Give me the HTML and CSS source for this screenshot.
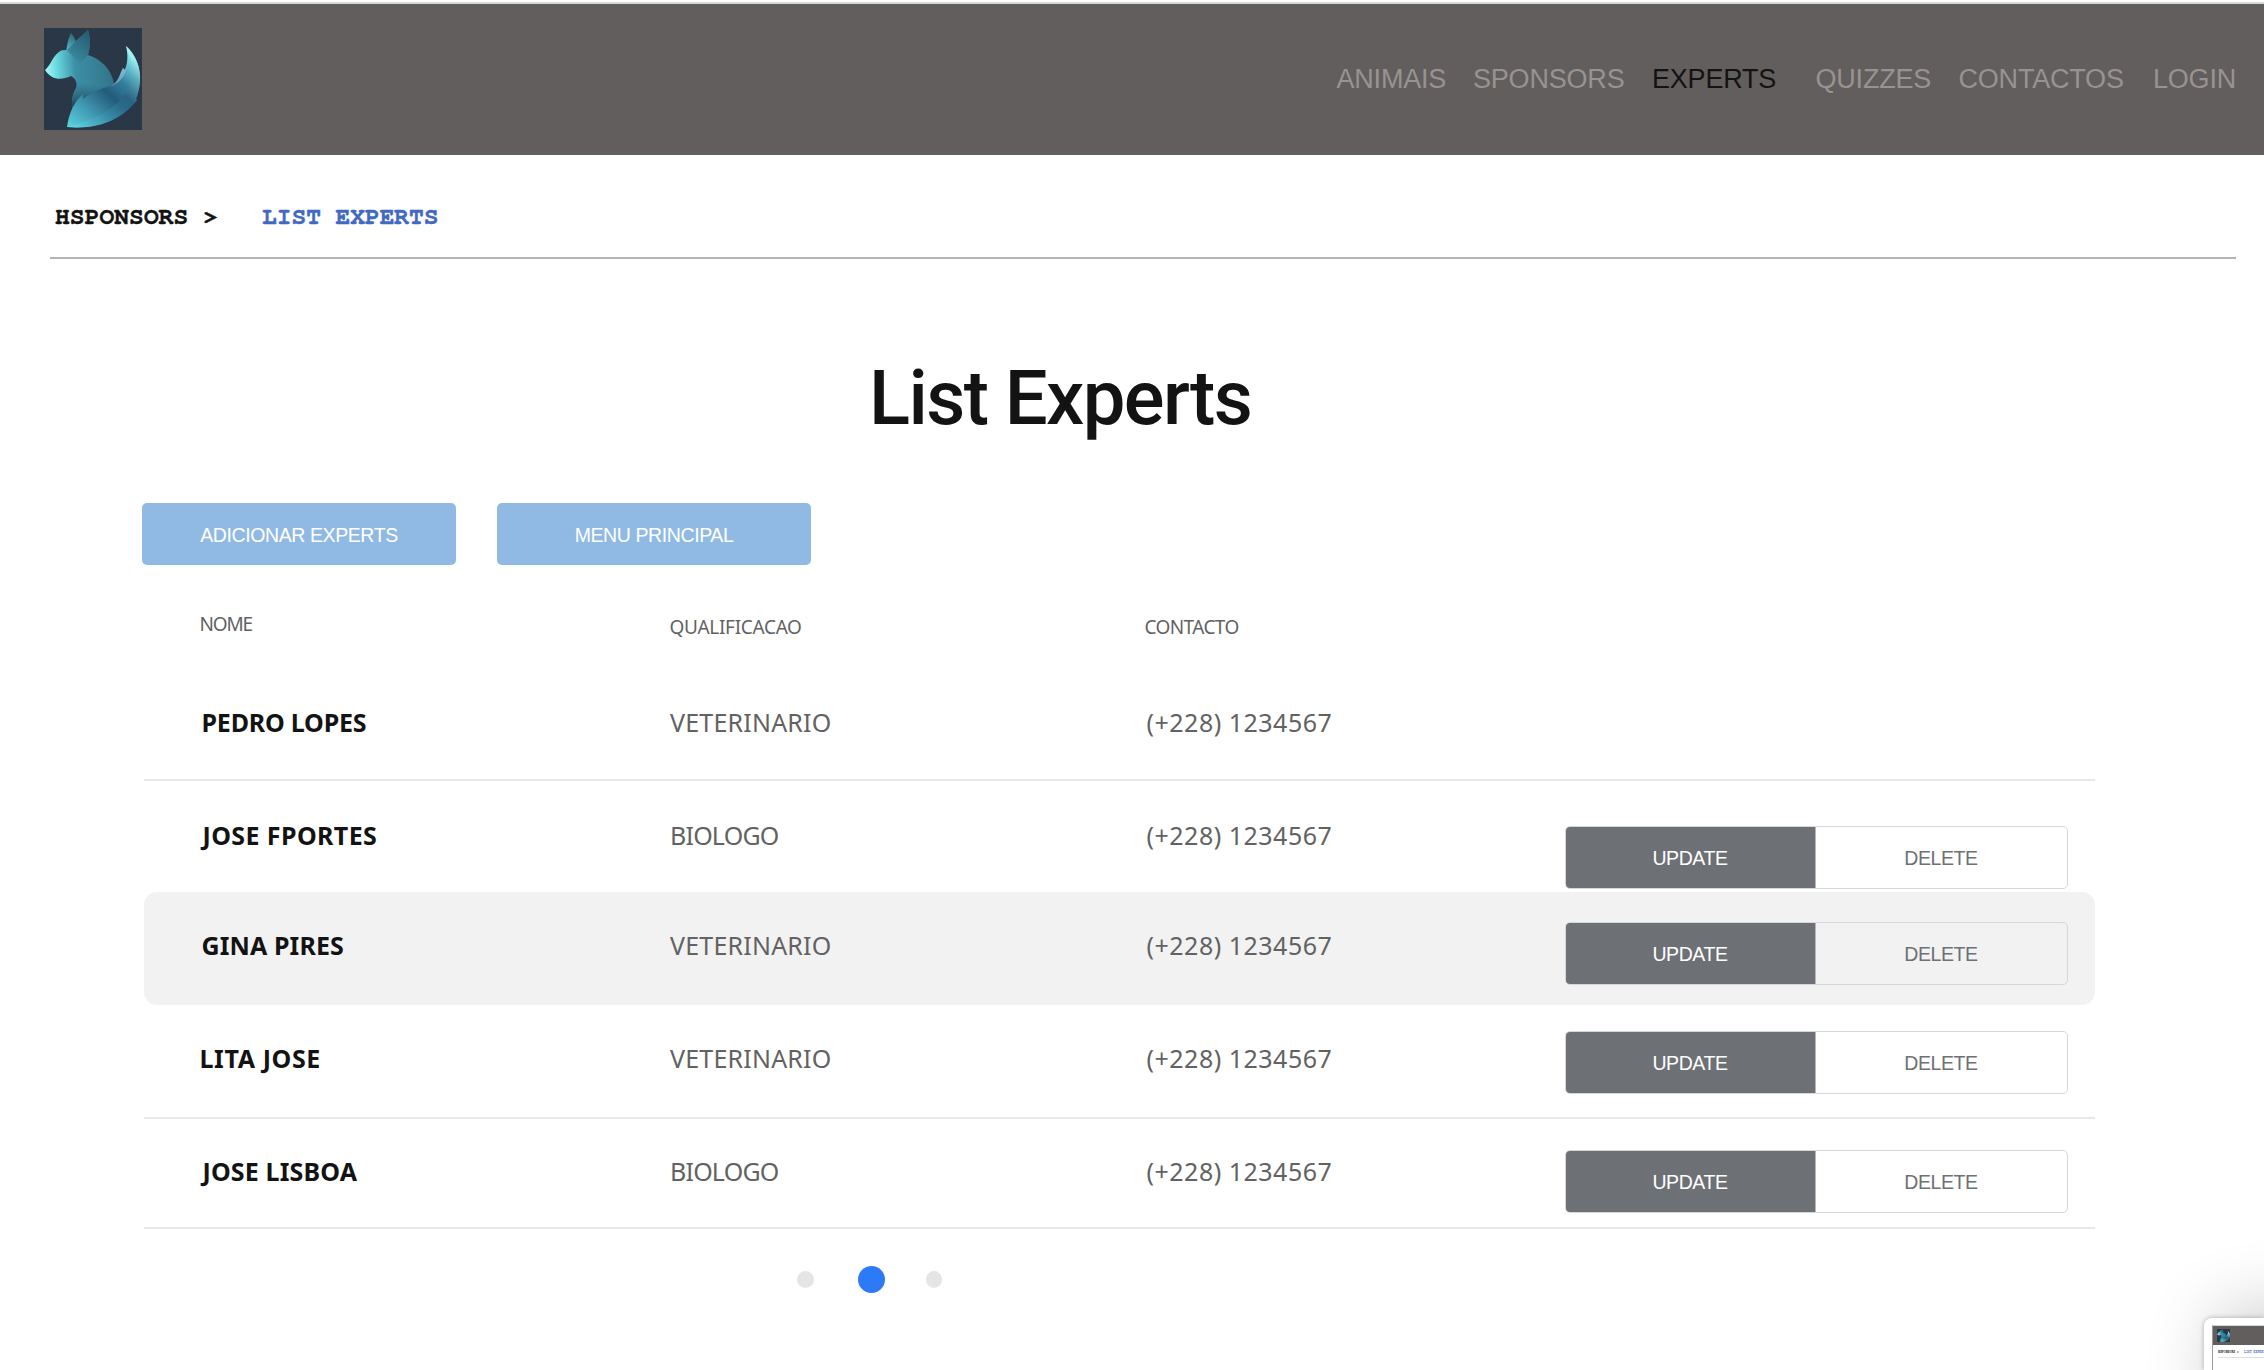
FILE: index.html
```
<!DOCTYPE html>
<html lang="pt">
<head>
<meta charset="utf-8">
<title>List Experts</title>
<link rel="stylesheet" href="styles.css">
</head>
<body>
<svg class="defs" width="0" height="0" aria-hidden="true">
  <defs>
    <linearGradient id="head" x1="0" y1="0.6" x2="1" y2="0.5">
      <stop offset="0" stop-color="#a5fffb"/><stop offset=".2" stop-color="#66d5dc"/><stop offset=".45" stop-color="#3c8fa6"/><stop offset="1" stop-color="#327489"/>
    </linearGradient>
    <linearGradient id="neck" x1="0.4" y1="0" x2="0.3" y2="1">
      <stop offset=".5" stop-color="#23566d" stop-opacity="0"/><stop offset=".9" stop-color="#23485d"/>
    </linearGradient>
    <linearGradient id="ear" x1="0.7" y1="0" x2="0.2" y2="1">
      <stop offset="0" stop-color="#215067"/><stop offset="1" stop-color="#3b8ea5"/>
    </linearGradient>
    <linearGradient id="ear2" x1="0.5" y1="0" x2="0.2" y2="1">
      <stop offset="0" stop-color="#2b6478"/><stop offset="1" stop-color="#5fc8d0"/>
    </linearGradient>
    <linearGradient id="tail" x1="24" y1="98" x2="92" y2="22" gradientUnits="userSpaceOnUse">
      <stop offset="0" stop-color="#5ad0dc"/><stop offset=".22" stop-color="#439fb8"/><stop offset=".5" stop-color="#245b7c"/><stop offset=".68" stop-color="#347f9d"/><stop offset=".86" stop-color="#6fd0dc"/><stop offset="1" stop-color="#b5fffb"/>
    </linearGradient>
    <linearGradient id="edge" x1="30" y1="98" x2="90" y2="30" gradientUnits="userSpaceOnUse">
      <stop offset="0" stop-color="#5fd5df"/><stop offset=".35" stop-color="#3489a5"/><stop offset=".62" stop-color="#26607f"/><stop offset=".85" stop-color="#62aebd"/><stop offset="1" stop-color="#a6f5f4"/>
    </linearGradient>
    <symbol id="fox" viewBox="0 0 98 102" preserveAspectRatio="none">
      <rect width="98" height="102" fill="#2a3747"/>
      <path d="M22 25C23 16 25 8 27 5C30 8 32 13 33 18L28 26Z" fill="url(#ear2)"/>
      <path d="M1 42C7 37 8 29 15 24C17 22 20 22 23 22L33 12L44 2C47 11 46 20 44 27C57 31 67 41 70 55L62 75L29 84C27 74 28 67 32 60C34 55 31 50 27 48C18 52 8 53 1 42Z" fill="url(#head)"/>
      <path d="M23 22L33 12L44 2C47 11 46 20 44 27L36 36Z" fill="url(#ear)" opacity=".75"/>
      <path d="M27 48L44 27C57 31 67 41 70 55L62 75L29 84C27 74 28 67 32 60C34 55 31 50 27 48Z" fill="url(#neck)"/>
      <path d="M23 99C25 85 30 74 39 66L39 71C50 62 61 60 70 56C75 52 76 45 79 40L81 42C84 34 84 26 82 18C92 27 97 40 96 54C95 61 94 66 92 71L93 72C80 89 58 102 23 99Z" fill="url(#tail)"/>
      <path d="M23 99C45 93 76 83 86 56C90 45 88 32 82 18C92 27 97 40 96 54C95 61 94 66 92 71L93 72C80 89 58 102 23 99Z" fill="url(#edge)" opacity=".75"/>
      <path d="M70 56C75 52 76 45 79 40L81 42L83 36C83 46 77 54 66 59Z" fill="#8fc5d8" opacity=".6"/>
    </symbol>
  </defs>
</svg>

<header class="topbar">
  <svg class="logo"><use href="#fox"/></svg>
  <nav class="nav">
    <a>ANIMAIS</a><a>SPONSORS</a><a class="active">EXPERTS</a><a>QUIZZES</a><a>CONTACTOS</a><a>LOGIN</a>
  </nav>
</header>

<div class="breadcrumb"><span class="parent">HSPONSORS &gt;</span><span class="current">LIST EXPERTS</span></div>

<main class="content">
  <h1 class="title">List Experts</h1>
  <div class="toolbar"><button class="btn">ADICIONAR EXPERTS</button><button class="btn">MENU PRINCIPAL</button></div>
  <div class="columns"><span class="col-name">NOME</span><span class="col-qual">QUALIFICACAO</span><span class="col-contact">CONTACTO</span></div>
  <div class="list">
    <div class="row pedro"><b>PEDRO LOPES</b><span>VETERINARIO</span><span class="phone">(+228) 1234567</span></div>
    <div class="row fportes"><b>JOSE FPORTES</b><span class="bio">BIOLOGO</span><span class="phone">(+228) 1234567</span><div class="actions"><button class="update">UPDATE</button><button class="delete">DELETE</button></div></div>
    <div class="row gina"><b>GINA PIRES</b><span>VETERINARIO</span><span class="phone">(+228) 1234567</span><div class="actions"><button class="update">UPDATE</button><button class="delete">DELETE</button></div></div>
    <div class="row lita"><b>LITA JOSE</b><span>VETERINARIO</span><span class="phone">(+228) 1234567</span><div class="actions"><button class="update">UPDATE</button><button class="delete">DELETE</button></div></div>
    <div class="row lisboa"><b>JOSE LISBOA</b><span class="bio">BIOLOGO</span><span class="phone">(+228) 1234567</span><div class="actions"><button class="update">UPDATE</button><button class="delete">DELETE</button></div></div>
  </div>
  <div class="pager"><i class="dot"></i><i class="dot on"></i><i class="dot last"></i></div>
</main>

<aside class="preview">
  <div class="preview-page">
    <div class="preview-bar"><svg class="preview-logo"><use href="#fox"/></svg></div>
    <div class="preview-crumb"><span>HSPONSORS &gt;</span><span class="current">LIST EXPERTS</span></div>
  </div>
</aside>
</body>
</html>
```
FILE: styles.css
```
* { box-sizing: border-box; }

body {
  margin: 0;
  height: 1370px;
  overflow: hidden;
  position: relative;
  background: #fff;
  font-family: "Noto Sans", sans-serif;
  color: #131313;
}

.defs { position: absolute; }

button {
  margin: 0;
  padding: 1px 0 0;
  border: 0;
  background: none;
  font: 19.5px/24px "Liberation Sans", Arial, sans-serif;
  letter-spacing: -0.4px;
}

.topbar {
  display: flex;
  justify-content: space-between;
  align-items: flex-start;
  margin-top: 2px;
  height: 153px;
  padding: 24px 28px 0 44px;
  border-top: 2px solid #d5d9d8;
  background: #625e5d;
}

.logo { display: block; width: 98px; height: 102px; }

.nav {
  display: grid;
  grid-template-columns: 136.5px 179px 163.5px 143px 194.5px 83px;
  margin-top: 36px;
  font: 27px/30px "Liberation Sans", Arial, sans-serif;
  letter-spacing: -0.2px;
  color: #979392;
  white-space: nowrap;
}

.nav .active { color: #131313; }

.breadcrumb {
  display: flex;
  gap: 44px;
  height: 104px;
  margin: 0 28px 0 50px;
  padding: 49px 0 0 5px;
  border-bottom: 2px solid #b4b4b4;
  font: bold 24.5px/25px FreeMono, "Liberation Mono", monospace;
  -webkit-text-stroke: 0.4px currentColor;
}

.parent { letter-spacing: 0.12px; }
.current { color: #4069c4; }

.content { padding-left: 142px; }

.title {
  margin: 95px 0 0 727px;
  font: 500 76px/88px Roboto, sans-serif;
  letter-spacing: -1.6px;
}

.toolbar { display: flex; gap: 41px; margin-top: 61px; }

.btn {
  width: 314px;
  height: 62px;
  border-radius: 5px;
  background: #90bae3;
  color: #fff;
}

.columns {
  display: grid;
  grid-template-columns: 470px 475px auto;
  height: 57px;
  margin-top: 46px;
  padding-left: 57.5px;
  font-size: 19px;
  line-height: 26px;
  color: #626262;
}

.col-name { letter-spacing: -1.2px; }
.col-qual { padding-top: 3px; letter-spacing: -0.3px; }
.col-contact { padding-top: 3px; letter-spacing: -0.6px; }

.list { width: 1951px; margin-left: 2px; }

.row {
  display: grid;
  grid-template-columns: 468.5px 476.5px 418px 503px;
  align-items: start;
  height: 113px;
  padding: 34px 0 0 57.5px;
  border-bottom: 2px solid transparent;
  font-size: 25px;
  line-height: 40px;
}

.row > span { color: #626262; letter-spacing: 0.2px; }
.row > .phone { letter-spacing: 0.5px; }
.row > .bio { letter-spacing: -0.8px; }

.pedro, .lita, .lisboa { border-bottom-color: #e8e8e8; }
.pedro b { letter-spacing: -0.2px; }
.fportes { height: 111px; }
.fportes b { padding-left: 1px; letter-spacing: 0.4px; }
.gina { border: 0; padding-top: 33px; border-radius: 13px; background: #f2f2f2; }
.gina b { letter-spacing: 0.1px; }
.lita { height: 114px; padding-top: 33px; }
.lita b { margin-left: -2px; letter-spacing: 0.6px; }
.lisboa { height: 110px; padding-top: 32px; }
.lisboa b { padding-left: 1px; letter-spacing: 0.15px; }

.actions {
  display: grid;
  grid-template-columns: 250px 1fr;
  height: 63px;
  border: 1px solid #d6d7d8;
  border-radius: 5px;
  overflow: hidden;
}

.fportes .actions { margin-top: 11px; }
.gina .actions { margin-top: -3px; }
.lita .actions { margin-top: -7px; }
.lisboa .actions { margin-top: -1px; }

.update { background: #6d7074; color: #fff; border-right: 1px solid #b5b7ba; }
.delete { color: #6d7074; }

.pager { display: flex; align-items: center; height: 28px; margin: 36px 0 0 655px; }

.dot { width: 17px; height: 17px; border-radius: 50%; background: #e4e5e7; }
.dot.on { width: 27px; height: 27px; margin: 0 41px 0 44px; background: #2d7af6; }
.dot.last { width: 16px; }

/* Floating thumbnail in the corner of the screen */
.preview {
  position: absolute;
  right: 0;
  bottom: 0;
  width: 60px;
  height: 52px;
  padding: 7px 0 0 8px;
  border-radius: 8px 0 0 0;
  background: #fff;
  box-shadow: 0 0 5px rgba(0, 0, 0, .28), 60px 40px 70px 50px rgba(0, 0, 0, .2);
}

.preview-page {
  height: 45px;
  border: solid #9a9a9a;
  border-width: 1px 0 0 1px;
  border-top-color: #d5d9d8;
}

.preview-bar { height: 19px; padding: 3px 4px; background: #625e5d; }
.preview-logo { display: block; width: 13px; height: 13px; }

.preview-crumb {
  display: flex;
  gap: 5px;
  height: 13px;
  margin-left: 5px;
  padding-top: 5px;
  border-bottom: 1px solid #ddd;
  overflow: hidden;
  font: bold 3.2px/5px FreeMono, "Liberation Mono", monospace;
  white-space: nowrap;
}
```
